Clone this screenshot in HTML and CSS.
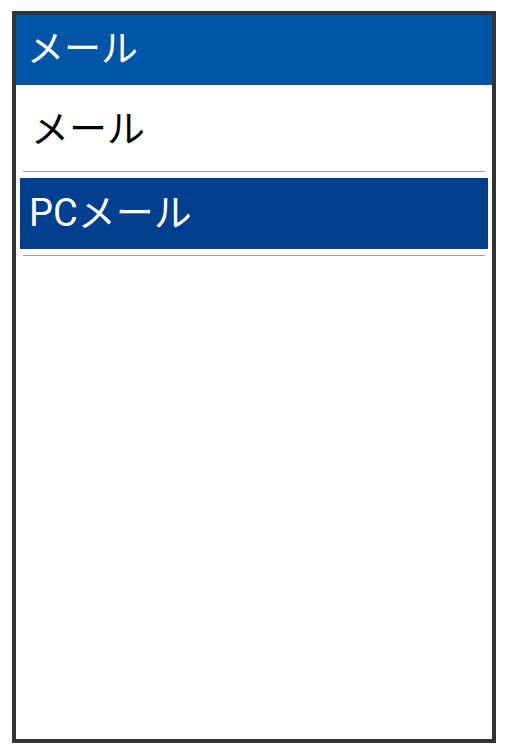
FILE: index.html
```html
<!DOCTYPE html>
<html lang="ja">

<head>
    <meta charset="UTF-8">
    <meta name="viewport" content="width=device-width, initial-scale=1.0">
    <title>メール</title>
    <link rel="stylesheet" href="styles.css">
</head>

<body>
    <div class="screen">
        <div class="title-bar">メール</div>

        <ul class="menu">
            <li class="menu-item">メール</li>
            <li class="menu-item selected">PCメール</li>
        </ul>
    </div>
</body>

</html>
```

FILE: styles.css
```css
body {
    margin: 0;
    padding: 11px 11px 10px 12px;
    font-family: Roboto, "Noto Sans CJK JP", sans-serif;
    background-color: #ffffff;
}

.screen {
    box-sizing: border-box;
    width: 484px;
    height: 732px;
    border: 4px solid #333333;
    background-color: #ffffff;
}

.title-bar {
    height: 70px;
    padding-left: 11px;
    background-color: #0055a6;
    color: white;
    font-size: 37px;
    line-height: 70px;
}

.menu {
    list-style: none;
    margin: 0;
    padding: 9px 4px 0 4px;
}

.menu-item {
    height: 71px;
    padding-left: 11px;
    margin-bottom: 13px;
    position: relative;
    color: black;
    font-size: 38px;
    line-height: 71px;
}

.menu-item:after {
    content: '';
    position: absolute;
    left: 3px;
    right: 3px;
    bottom: -7px;
    height: 1px;
    background-color: #a0a0a0;
}

.menu-item.selected {
    padding-left: 9px;
    background-color: #003f8e;
    color: white;
}
```
